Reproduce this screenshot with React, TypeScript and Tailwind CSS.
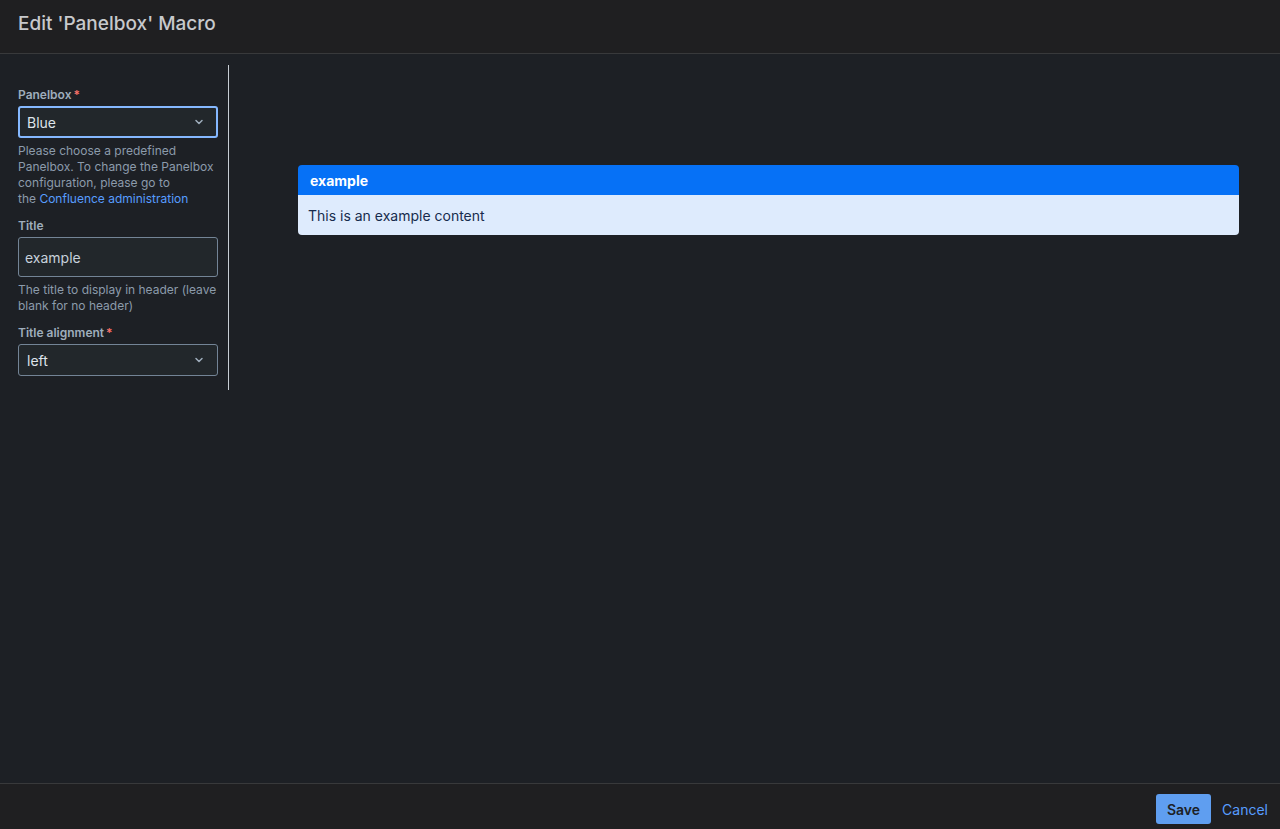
import React, { useState } from 'react';
import { ChevronDown } from 'lucide-react';

const font = { fontFamily: 'Inter, "Noto Sans", sans-serif' };

const Label: React.FC<{ text: string; required?: boolean }> = ({ text, required }) => (
  <div className="flex items-start text-[12px] font-semibold text-[#9fadbc] leading-4 mb-[3px]">
    {text}
    {required && <span className="ml-[2px] text-[#f87168]">*</span>}
  </div>
);

const SelectBox: React.FC<{ value: string; focused?: boolean }> = ({ value, focused }) => (
  <div
    className={
      focused
        ? 'flex items-center justify-between h-[32px] rounded-[3px] border-2 border-[#85b8ff] bg-[#22272b] pl-[7px] pr-[11px] text-[14px] text-[#dee4ea]'
        : 'flex items-center justify-between h-[32px] rounded-[3px] border border-[#738496] bg-[#22272b] pl-[8px] pr-[12px] text-[14px] text-[#dee4ea]'
    }
  >
    <span>{value}</span>
    <ChevronDown className="w-[12px] h-[12px] text-[#9fadbc]" strokeWidth={3} />
  </div>
);

const App: React.FC = () => {
  const [title] = useState('example');

  return (
    <div className="h-[829px] w-[1280px] flex flex-col bg-[#1d2025]" style={font}>
      <header className="h-[54px] shrink-0 flex items-center pb-[4px] px-[18px] bg-[#1f1f21] border-b border-[#38393b]">
        <h1 className="text-[19px] font-medium text-[#c7c9cc]">Edit 'Panelbox' Macro</h1>
      </header>

      <main className="flex-1 flex pt-[11px]">
        <aside className="w-[229px] shrink-0 self-start border-r border-[#c7cdd4] pl-[18px] pr-[10px] pt-[22px] pb-[14px]">
          <Label text="Panelbox" required />
          <SelectBox value="Blue" focused />
          <p className="mt-[5px] text-[12px] leading-4 text-[#8c9bab]">
            Please choose a predefined Panelbox. To change the Panelbox configuration, please go to{' '}
            <span className="whitespace-nowrap">
              the <a className="text-[#579dff]">Confluence administration</a>
            </span>
          </p>

          <div className="mt-[11px]">
            <Label text="Title" />
            <div className="flex items-center h-[40px] rounded-[3px] border border-[#738496] bg-[#22272b] px-[6px] text-[14px] text-[#c7d1db]">
              {title}
            </div>
            <p className="mt-[5px] text-[12px] leading-4 text-[#8c9bab]">
              The title to display in header (leave blank for no header)
            </p>
          </div>

          <div className="mt-[11px]">
            <Label text="Title alignment" required />
            <SelectBox value="left" />
          </div>
        </aside>

        <section className="flex-1 pl-[69px] pr-[41px] pt-[100px]">
          <div className="rounded-[4px] overflow-hidden">
            <div className="h-[30px] flex items-center px-[12px] bg-[#0671f6] text-[14px] font-bold text-white">
              example
            </div>
            <div className="h-[40px] flex items-center px-[10px] bg-[#deebfd] text-[14px] text-[#172b4d]">
              This is an example content
            </div>
          </div>
        </section>
      </main>

      <footer className="h-[46px] shrink-0 flex items-start justify-end gap-[11px] pt-[10px] pr-[12px] bg-[#1f1f21] border-t border-[#38393b]">
        <button className="h-[30px] px-[11px] rounded-[3px] bg-[#5f9ef0] text-[14px] font-semibold text-[#1d2125]">
          Save
        </button>
        <button className="h-[30px] text-[14px] text-[#579dff]">Cancel</button>
      </footer>
    </div>
  );
};

export default App;
